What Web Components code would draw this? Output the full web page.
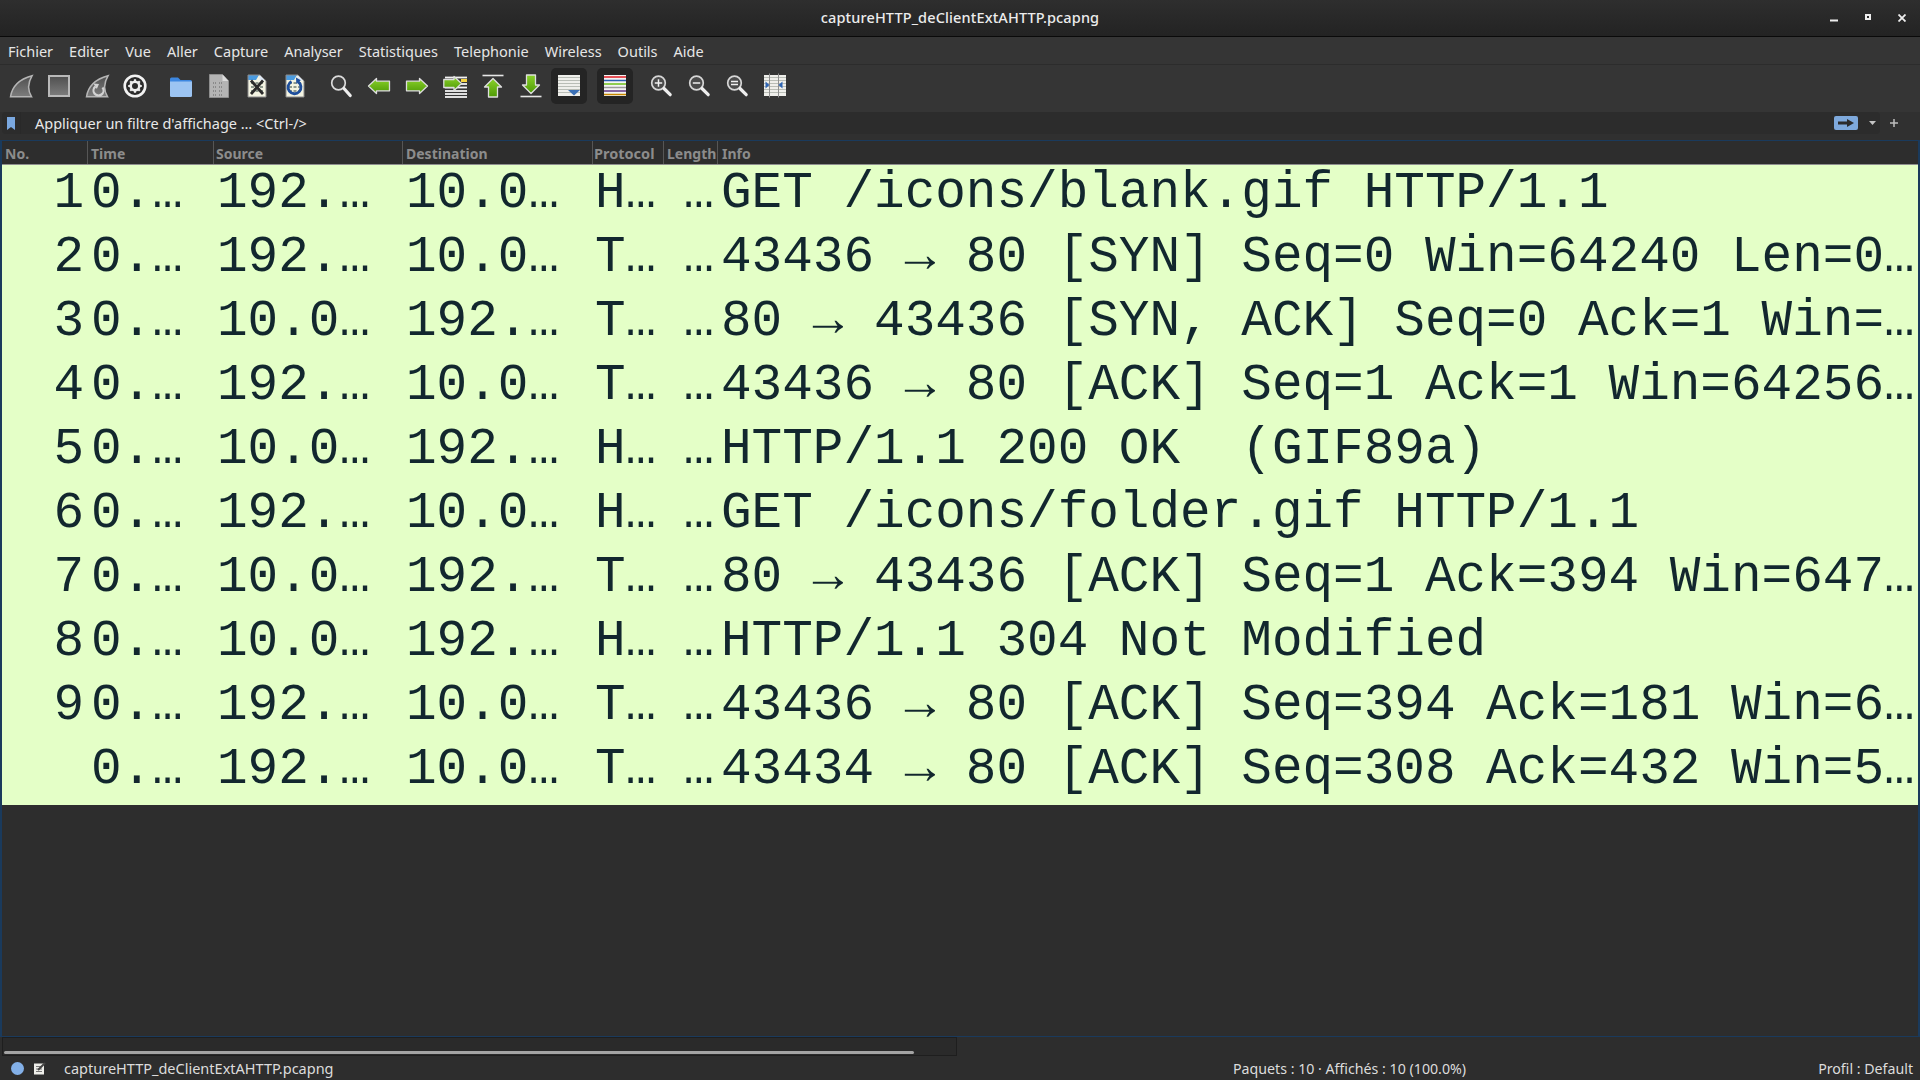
<!DOCTYPE html>
<html lang="fr">
<head>
<meta charset="utf-8">
<title>captureHTTP_deClientExtAHTTP.pcapng</title>
<style>
  html, body { margin: 0; height: 100%; background: #2d2d2d; overflow: hidden; }
  body { font: 14.5px "Noto Sans", sans-serif; color: #e4e4e4; }
</style>
</head>
<body>
<ws-window>
  <ws-titlebar>captureHTTP_deClientExtAHTTP.pcapng</ws-titlebar>
  <ws-menubar items="Fichier,Editer,Vue,Aller,Capture,Analyser,Statistiques,Telephonie,Wireless,Outils,Aide"></ws-menubar>
  <ws-toolbar></ws-toolbar>
  <ws-filterbar>Appliquer un filtre d'affichage … &lt;Ctrl-/&gt;</ws-filterbar>
  <ws-packetlist></ws-packetlist>
  <ws-statusbar></ws-statusbar>
</ws-window>

<script>
// shared svg defs are repeated per icon on purpose, each shadow root has its own id scope
const fin = 'M1.5 22.8C3 13 9.5 5.5 23 1.8 19 8.5 18.2 15.5 22.6 22.8Z'
const finGrad = '<linearGradient id="g" x1="0" y1="0" x2="0" y2="1"><stop offset="0" stop-color="#4f4f4f"/><stop offset="1" stop-color="#7d7d7d"/></linearGradient>'
const green = '<linearGradient id="a" x1="0" y1="0" x2="0" y2="1"><stop offset="0" stop-color="#8ad12a"/><stop offset="1" stop-color="#4e9a06"/></linearGradient>'
const corner = '<path d="M14.5 1v5.5H21" fill="#dfe9f5"/><path d="M3 1h12l6 6v16H3Z" fill="none" stroke="#8c8c8c"/>'
const paperBits = [9, 13, 17].map(y => `<path d="M6 ${y}h3M10.5 ${y}h3M15 ${y}h3" stroke="#8f9a8f" stroke-width="2.2"/>`).join('')
const stripes = ys => ys.map(y => `<path d="M1 ${y}h22" stroke="#b9bdb6" stroke-width="1"/>`).join('')
const lens = inner => `<circle cx="9.5" cy="9" r="6.8" fill="#4b4b4b" stroke="#d6d6d6" stroke-width="1.7"/>${inner}<path d="M15 14.5l6.2 6.2" stroke="#eee" stroke-width="3.2" stroke-linecap="round"/>`

const ICONS = {
  start: `<defs>${finGrad}</defs><path d="${fin}" fill="url(#g)" stroke="#b5b5b5" stroke-width="1.5"/>`,
  stop: `<defs>${finGrad}</defs><rect x="2" y="2" width="20" height="20" fill="url(#g)" stroke="#b9b9b9" stroke-width="2"/>`,
  restart: `<defs>${finGrad}</defs><path d="${fin}" fill="url(#g)" stroke="#b5b5b5" stroke-width="1.5"/><path d="M10.5 12.5a5 5 0 1 0 7 1" fill="none" stroke="#d2d2d2" stroke-width="2.2"/><path d="M8.5 9.5l5.5 .5-2.2 5Z" fill="#d2d2d2"/>`,
  gear: `<circle cx="12" cy="12" r="10.3" fill="#2a2a2a" stroke="#f2f2f2" stroke-width="2.6"/><circle cx="12" cy="12" r="4.3" fill="none" stroke="#eee" stroke-width="2.6"/><path d="M12 5.2v2.6M12 16.2v2.6M5.2 12h2.6M16.2 12h2.6M7.2 7.2l1.8 1.8M15 15l1.8 1.8M16.8 7.2L15 9M9 15l-1.8 1.8" stroke="#eee" stroke-width="2.2"/>`,
  folder: `<path d="M1 5a1.5 1.5 0 0 1 1.5-1.5H9l2.5 2.5h10A1.5 1.5 0 0 1 23 7.500V12H1Z" fill="#3d87e0"/><path d="M1 7.500h22v14a1.500 1.500 0 0 1-1.500 1.500h-19A1.500 1.500 0 0 1 1 21.500Z" fill="#9cc4f2"/>`,
  file: `<path d="M2.500 .5h13l6 6.500v16.500h-19Z" fill="#b4b4b4" stroke="#8e8e8e"/><path d="M15.500 .5v6.500h6" fill="#dcdcdc"/>${[9, 13, 17, 21].map(y => `<path d="M6 ${y}h4M12 ${y}h4" stroke="#8a8a8a" stroke-width="2" stroke-dasharray="1 1"/>`).join('')}`,
  close: `<path d="M3 1h12l6 6v16H3Z" fill="#f4f4e2"/><path d="M3 1h11l-3 5H3Z" fill="#4a9be0"/>${paperBits}${corner}<path d="M6 6.500l12 13.500M18 6.500L6 20" stroke="#2b2b2b" stroke-width="2.800"/>`,
  reload: `<path d="M3 1h12l6 6v16H3Z" fill="#f4f4e2"/><path d="M3 1h11l-3 5H3Z" fill="#4a9be0"/>${paperBits}${corner}<path d="M8.500 7.500a6.500 6.500 0 1 0 6.500 .3" fill="none" stroke="#1f4f9c" stroke-width="2.800"/><path d="M13 3.500l.3 6.500 4.500-3.800Z" fill="#1f4f9c"/>`,
  find: `<circle cx="9.500" cy="9" r="6.800" fill="#3f3f3f" stroke="#dcdcdc" stroke-width="1.700"/><path d="M15 14.500l6.200 7" stroke="#eee" stroke-width="3.200" stroke-linecap="round"/>`,
  back: `<defs>${green}</defs><path d="M1.500 12L9.500 4.500V7.200H22.500V16.800H9.500V19.500Z" fill="url(#a)" stroke="#dedede" stroke-width="1.300" stroke-linejoin="round"/>`,
  forward: `<defs>${green}</defs><path d="M22.500 12L14.500 4.500V7.200H1.500V16.800H14.500V19.500Z" fill="url(#a)" stroke="#dedede" stroke-width="1.300" stroke-linejoin="round"/>`,
  goto: `<defs>${green}</defs>${[3.5, 10, 13.500, 17, 20, 23].map(y => `<path d="M2 ${y}h22" stroke="#f2f2f2" stroke-width="1.800"/>`).join('')}<rect x="18" y="5" width="6" height="3" fill="#f5d33f"/><path d="M18.500 9.500L11 2.500V5.500H.8V13.500H11V16.500Z" fill="url(#a)" stroke="#dedede" stroke-width="1.300" stroke-linejoin="round"/>`,
  top: `<defs>${green}</defs><path d="M1.500 1.500h21" stroke="#e6e6e6" stroke-width="1.600"/><path d="M12 4.500L20.500 13H16.500V23H7.500V13H3.500Z" fill="url(#a)" stroke="#dedede" stroke-width="1.300" stroke-linejoin="round"/>`,
  bottom: `<defs>${green}</defs><path d="M1.500 22.500h21" stroke="#e6e6e6" stroke-width="1.600"/><path d="M12 19.500L20.500 11H16.500V1H7.500V11H3.500Z" fill="url(#a)" stroke="#dedede" stroke-width="1.300" stroke-linejoin="round"/>`,
  autoscroll: `<rect x="1" y="1" width="22" height="21" fill="#efefeb"/>${stripes([3.500, 6.500, 9.500, 12.500, 15.500, 18.500])}<path d="M11 16h12l-6 5.500Z" fill="#3a6fb5"/>`,
  colorize: `<rect x="1" y="1" width="22" height="21" fill="#f4f4f4"/><path d="M1 3h22" stroke="#e01b24" stroke-width="1.500"/><path d="M1 6.500h22" stroke="#2a5fb0" stroke-width="1.500"/><path d="M1 10h22" stroke="#6cc01a" stroke-width="1.500"/><path d="M1 13.500h22" stroke="#9a9a9a" stroke-width="1.500"/><path d="M1 17h22" stroke="#613583" stroke-width="1.500"/><path d="M1 20.500h22" stroke="#c88800" stroke-width="1.500"/>`,
  zoomin: lens('<path d="M5.800 9h7.400M9.500 5.300v7.400" stroke="#efefef" stroke-width="1.500"/>'),
  zoomout: lens('<path d="M5.800 9h7.400" stroke="#efefef" stroke-width="1.500"/>'),
  zoomreset: lens('<path d="M6 7.500h7M6 10.500h7" stroke="#efefef" stroke-width="1.400"/>'),
  resize: `<rect x="1" y="1" width="22" height="21" fill="#efefeb"/>${stripes([3.500, 6.500, 9.500, 12.500, 15.500, 18.500])}<path d="M6.500 -.5v24M15.500 -.5v24" stroke="#8f8f8f" stroke-width="1"/><path d="M2.500 7.500l4 3.500-4 3.500ZM19.500 7.500l-4 3.500 4 3.500Z" fill="#2f66b5"/>`
}

const PACKETS = [
  ['1', 'H…', '192.…', '10.0…', 'GET /icons/blank.gif HTTP/1.1'],
  ['2', 'T…', '192.…', '10.0…', '43436 → 80 [SYN] Seq=0 Win=64240 Len=0…'],
  ['3', 'T…', '10.0…', '192.…', '80 → 43436 [SYN, ACK] Seq=0 Ack=1 Win=…'],
  ['4', 'T…', '192.…', '10.0…', '43436 → 80 [ACK] Seq=1 Ack=1 Win=64256…'],
  ['5', 'H…', '10.0…', '192.…', 'HTTP/1.1 200 OK  (GIF89a)'],
  ['6', 'H…', '192.…', '10.0…', 'GET /icons/folder.gif HTTP/1.1'],
  ['7', 'T…', '10.0…', '192.…', '80 → 43436 [ACK] Seq=1 Ack=394 Win=647…'],
  ['8', 'H…', '10.0…', '192.…', 'HTTP/1.1 304 Not Modified'],
  ['9', 'T…', '192.…', '10.0…', '43436 → 80 [ACK] Seq=394 Ack=181 Win=6…'],
  ['', 'T…', '192.…', '10.0…', '43434 → 80 [ACK] Seq=308 Ack=432 Win=5…']
]

const COLUMNS = '86px 126px 189px 190px 71px 54px 1fr'

class WsWindow extends HTMLElement {
  constructor () {
    super()
    this.attachShadow({ mode: 'open' }).innerHTML = `
      <style>
        :host { display: flex; flex-direction: column; width: 1920px; height: 1080px; overflow: hidden; }
      </style>
      <slot></slot>`
  }
}

class WsTitlebar extends HTMLElement {
  constructor () {
    super()
    this.attachShadow({ mode: 'open' }).innerHTML = `
      <style>
        :host { display: grid; grid-template-columns: 1fr auto 1fr; align-items: center; height: 36px; flex: none;
          background: linear-gradient(#2e2e2e, #232323); border-bottom: 1px solid #0a0a0a; color: #ececec; }
        .name { grid-column: 2; font-size: 14.5px; letter-spacing: .13px; font-weight: 500; margin-top: -3px; }
        .btns { grid-column: 3; justify-self: end; display: flex; margin-right: 14px; align-items: center; gap: 27px; }
        svg { display: block; }
      </style>
      <span class="name"><slot></slot></span>
      <div class="btns">
        <svg width="8" height="8" viewBox="0 0 8 8"><path d="M0 6.500h8" stroke="#eee" stroke-width="2"/></svg>
        <svg width="6" height="6" viewBox="0 0 6 6" style="margin-top:-2px"><path d="M0 0h6v6H0ZM2 2v2h2V2Z" fill="#eee" fill-rule="evenodd"/></svg>
        <svg width="8" height="8" viewBox="0 0 8 8" style="margin-top:-1px"><path d="M.5 .5l7 7M7.500 .5l-7 7" stroke="#eee" stroke-width="1.800"/></svg>
      </div>`
  }
}

class WsMenubar extends HTMLElement {
  connectedCallback () {
    const items = this.getAttribute('items').split(',')
    this.attachShadow({ mode: 'open' }).innerHTML = `
      <style>
        :host { display: flex; align-items: center; height: 27px; flex: none; background: #353535; color: #e6e6e6; font-size: 14.5px; }
        span { padding: 0 8px; }
      </style>
      ${items.map(i => `<span>${i}</span>`).join('')}`
  }
}

class WsTool extends HTMLElement {
  connectedCallback () {
    this.attachShadow({ mode: 'open' }).innerHTML = `
      <style>
        :host { display: flex; align-items: center; justify-content: center; width: 38px; height: 36px; flex: none; }
        .b { display: flex; align-items: center; justify-content: center; width: 36px; height: 36px; border-radius: 5px; }
        :host([checked]) .b { background: #242424; }
        svg { display: block; overflow: visible; }
      </style>
      <div class="b"><svg width="24" height="24" viewBox="0 0 24 24">${ICONS[this.getAttribute('icon')]}</svg></div>`
  }
}

class WsToolbar extends HTMLElement {
  connectedCallback () {
    const groups = [
      ['start', 'stop', 'restart', 'gear'],
      ['folder', 'file', 'close', 'reload'],
      ['find', 'back', 'forward', 'goto', 'top', 'bottom', 'autoscroll'],
      ['colorize'],
      ['zoomin', 'zoomout', 'zoomreset', 'resize']
    ]
    const checked = ['autoscroll', 'colorize']
    this.attachShadow({ mode: 'open' }).innerHTML = `
      <style>
        :host { display: flex; align-items: center; gap: 8px; height: 41px; flex: none; padding: 0 0 6px 2px; background: #353535; border-top: 1px solid #2c2c2c; }
        div { display: flex; }
      </style>
      ${groups.map(g => `<div>${g.map(n => `<ws-tool icon="${n}"${checked.includes(n) ? ' checked' : ''}></ws-tool>`).join('')}</div>`).join('')}`
  }
}

class WsFilterbar extends HTMLElement {
  constructor () {
    super()
    this.attachShadow({ mode: 'open' }).innerHTML = `
      <style>
        :host { display: flex; align-items: center; height: 28px; flex: none; background: #303030; box-sizing: border-box; padding: 0 12px 6px 2px; color: #e8e8e8; font-size: 14.5px; }
        .edit { display: flex; align-items: center; flex: 1; height: 22px; background: #2c2c2c; border-radius: 4px; }
        .mark { display: flex; align-items: center; justify-content: center; width: 18px; height: 22px; border-right: 1px solid #292929; }
        .text { flex: 1; margin-left: 14px; }
        .apply { display: flex; align-items: center; justify-content: center; width: 24px; height: 14px; background: #7ea9dc; border-radius: 2px; margin-right: 11px; }
        .drop { margin-right: 4px; width: 7px; }
        .plus { width: 28px; display: flex; justify-content: center; }
        svg { display: block; }
      </style>
      <div class="edit">
        <div class="mark"><svg width="8" height="13" viewBox="0 0 8 13"><path d="M0 0h8v13L4 10 0 13Z" fill="#7aa8e0"/></svg></div>
        <div class="text"><slot></slot></div>
        <div class="apply"><svg width="16" height="8" viewBox="0 0 16 8"><path d="M0 2.500h9V0l7 4-7 4V5.500H0Z" fill="#2b2b2b"/></svg></div>
        <div class="drop"><svg width="7" height="4" viewBox="0 0 7 4"><path d="M0 0h7L3.500 4Z" fill="#c4c4c4"/></svg></div>
      </div>
      <div class="plus"><svg width="8" height="8" viewBox="0 0 8 8"><path d="M4 0v8M0 4h8" stroke="#bdbdbd" stroke-width="1.500"/></svg></div>`
  }
}

class WsPacketRow extends HTMLElement {
  set data (p) {
    const [no, proto, src, dst, info] = p
    this.attachShadow({ mode: 'open' }).innerHTML = `
      <style>
        :host { display: grid; grid-template-columns: ${COLUMNS}; height: 64px; align-items: start; background: #e4ffc7; color: #12272e;
          font: 51px/58px "Liberation Mono", monospace; white-space: pre; overflow: hidden; }
        span { overflow: hidden; padding-left: 3px; }
        .r { text-align: right; padding: 0 4px 0 0; }
        .p { padding-left: 2px; }
      </style>
      <span class="r">${no}</span><span>0.…</span><span>${src}</span><span>${dst}</span><span class="p">${proto}</span><span class="r">…</span><span>${info}</span>`
  }
}

class WsPacketlist extends HTMLElement {
  connectedCallback () {
    const heads = ['No.', 'Time', 'Source', 'Destination', 'Protocol', 'Length', 'Info']
    this.attachShadow({ mode: 'open' }).innerHTML = `
      <style>
        :host { display: flex; flex-direction: column; height: 897px; flex: none; box-sizing: border-box; background: #2d2d2d;
          border: 2px solid #1a3a5c; border-width: 1px 2px 1px 2px; }
        .head { display: grid; grid-template-columns: ${COLUMNS}; height: 24px; flex: none; box-sizing: border-box; border-bottom: 1px solid #8f8f8f; }
        .head span { font-weight: 700; color: #8c8c8c; font-size: 14px; line-height: 25px; padding-left: 3px; border-right: 1px solid #565656; overflow: hidden; }
        .head span:nth-child(3) { padding-left: 2px; }
        .head span:nth-child(5) { padding-left: 1px; font-size: 14.5px; }
        .head span:last-child { border: 0; padding-left: 4px; }
      </style>
      <div class="head">${heads.map(h => `<span>${h}</span>`).join('')}</div>
      <div id="rows"></div>`
    const rows = this.shadowRoot.getElementById('rows')
    PACKETS.forEach(p => {
      const r = document.createElement('ws-packet-row')
      r.data = p
      rows.appendChild(r)
    })
  }
}

class WsStatusbar extends HTMLElement {
  connectedCallback () {
    this.attachShadow({ mode: 'open' }).innerHTML = `
      <style>
        :host { display: flex; flex-direction: column; flex: 1; min-height: 0; background: #2d2d2d; color: #dcdcdc; font-size: 14.5px; }
        .scroll { height: 19px; flex: none; width: 955px; margin-left: 2px; box-sizing: border-box; border: 1px solid #1e1e1e; background: #2a2a2a; position: relative; }
        .thumb { position: absolute; left: 1px; bottom: 1px; width: 910px; height: 3px; background: #a4a4a4; border-radius: 2px; }
        .line { display: flex; align-items: center; flex: 1; position: relative; }
        .ico { display: flex; align-items: center; gap: 9px; margin-left: 11px; width: 53px; }
        .stats { position: absolute; left: 1233px; font-size: 14.2px; }
        .prof { margin-left: auto; margin-right: 7px; font-size: 14.2px; }
        svg { display: block; }
      </style>
      <div class="scroll"><div class="thumb"></div></div>
      <div class="line">
        <div class="ico">
          <svg width="13" height="13" viewBox="0 0 13 13"><circle cx="6.500" cy="6.500" r="6.500" fill="#83b0e8"/></svg>
          <svg width="13" height="13" viewBox="0 0 13 13"><rect x="1" y="1.500" width="10" height="11" fill="#eeeeea"/><path d="M3 4.500h6M3 7h6M3 9.500h6" stroke="#777"/><path d="M5 8l7-7" stroke="#444" stroke-width="2"/></svg>
        </div>
        <span>captureHTTP_deClientExtAHTTP.pcapng</span>
        <span class="stats">Paquets : 10 · Affichés : 10 (100.0%)</span>
        <span class="prof">Profil : Default</span>
      </div>`
  }
}

customElements.define('ws-window', WsWindow)
customElements.define('ws-titlebar', WsTitlebar)
customElements.define('ws-menubar', WsMenubar)
customElements.define('ws-tool', WsTool)
customElements.define('ws-toolbar', WsToolbar)
customElements.define('ws-filterbar', WsFilterbar)
customElements.define('ws-packet-row', WsPacketRow)
customElements.define('ws-packetlist', WsPacketlist)
customElements.define('ws-statusbar', WsStatusbar)
</script>
</body>
</html>
